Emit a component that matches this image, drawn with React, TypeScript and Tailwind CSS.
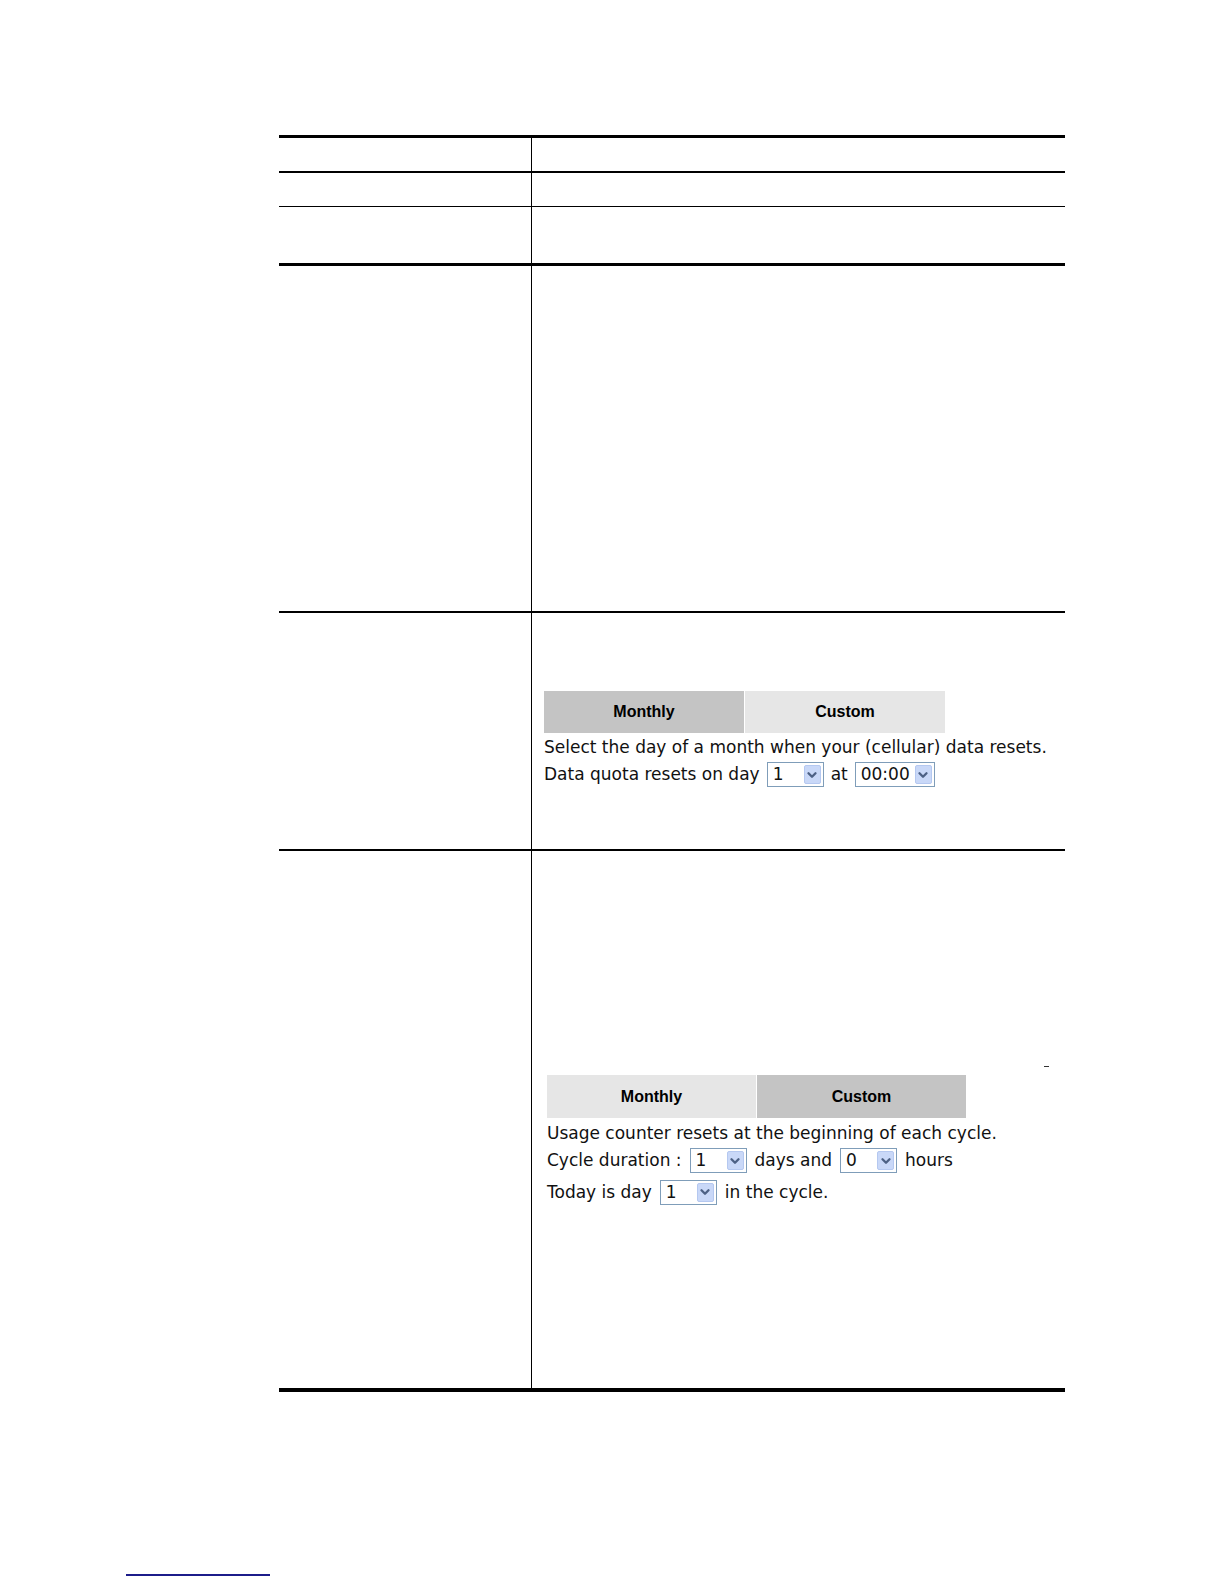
import { ChevronDown } from "lucide-react";

function Select({ value, width }: { value: string; width: string }) {
  return (
    <span
      className={`inline-flex h-[25px] ${width} items-center border border-[#7f9db9] bg-white align-middle`}>
      <span className="flex-1 pl-[5px] leading-none">{value}</span>
      <span className="mr-[2px] flex h-[19px] w-[17px] items-center justify-center rounded-[2px] border border-[#b5c8f0] bg-[#c9d8f8]">
        <ChevronDown size={14} strokeWidth={4} className="text-[#4d6185]" />
      </span>
    </span>
  );
}

function Tabs({ active, widths }: { active: "monthly" | "custom"; widths: string }) {
  const tabs = [
    { key: "monthly", label: "Monthly" },
    { key: "custom", label: "Custom" },
  ];
  return (
    <div className="flex font-['Liberation_Sans',Arial,sans-serif] text-[16px] font-bold text-black">
      {tabs.map((t) => (
        <div
          key={t.key}
          className={`flex ${widths} items-center justify-center border-r border-white ${
            active === t.key ? "bg-[#c4c4c4]" : "bg-[#e6e6e6]"
          }`}>
          {t.label}
        </div>
      ))}
    </div>
  );
}

export default function App() {
  return (
    <div className="min-h-[1584px] w-[1224px] bg-white pt-[135px] font-['DejaVu_Sans',Verdana,sans-serif] text-[17px] text-[#111]">
      {/* table */}
      <div className="ml-[279px] w-[786px] border-t-[3px] border-black">
        <div className="flex h-[35px] border-b-[2px] border-black">
          <div className="w-[253px] border-r border-black" />
          <div className="flex-1" />
        </div>
        <div className="flex h-[34px] border-b border-black">
          <div className="w-[253px] border-r border-black" />
          <div className="flex-1" />
        </div>
        <div className="flex h-[59px] border-b-[3px] border-black">
          <div className="w-[253px] border-r border-black" />
          <div className="flex-1" />
        </div>
        <div className="flex h-[347px] border-b-[2px] border-black">
          <div className="w-[253px] border-r border-black" />
          <div className="flex-1" />
        </div>
        <div className="flex h-[238px] border-b-[2px] border-black">
          <div className="w-[253px] border-r border-black" />
          <div className="flex-1 pl-[12px] pt-[78px]">
            <Tabs active="monthly" widths="h-[42px] w-[201px]" />
            <div className="mt-[2px] leading-[24px]">
              Select the day of a month when your (cellular) data resets.
            </div>
            <div className="mt-[3px] flex items-center gap-[7px]">
              <span>Data quota resets on day</span>
              <Select value="1" width="w-[57px]" />
              <span>at</span>
              <Select value="00:00" width="w-[80px]" />
            </div>
          </div>
        </div>
        <div className="flex h-[541px] border-b-[4px] border-black">
          <div className="w-[253px] border-r border-black" />
          <div className="relative flex-1 pl-[15px] pt-[224px]">
            <span className="absolute left-[512px] top-[215px] h-[1px] w-[5px] bg-[#333]" />
            <Tabs active="custom" widths="h-[43px] w-[210px]" />
            <div className="mt-[3px] leading-[24px]">
              Usage counter resets at the beginning of each cycle.
            </div>
            <div className="mt-[3px] flex items-center gap-[8px]">
              <span>Cycle duration :</span>
              <Select value="1" width="w-[57px]" />
              <span>days and</span>
              <Select value="0" width="w-[57px]" />
              <span>hours</span>
            </div>
            <div className="mt-[6px] flex items-center gap-[8px]">
              <span>Today is day</span>
              <Select value="1" width="w-[57px]" />
              <span>in the cycle.</span>
            </div>
          </div>
        </div>
      </div>

      {/* footer link */}
      <div className="ml-[126px] mt-[182px] h-[2px] w-[144px] bg-[#1c1c8a]" />
    </div>
  );
}
